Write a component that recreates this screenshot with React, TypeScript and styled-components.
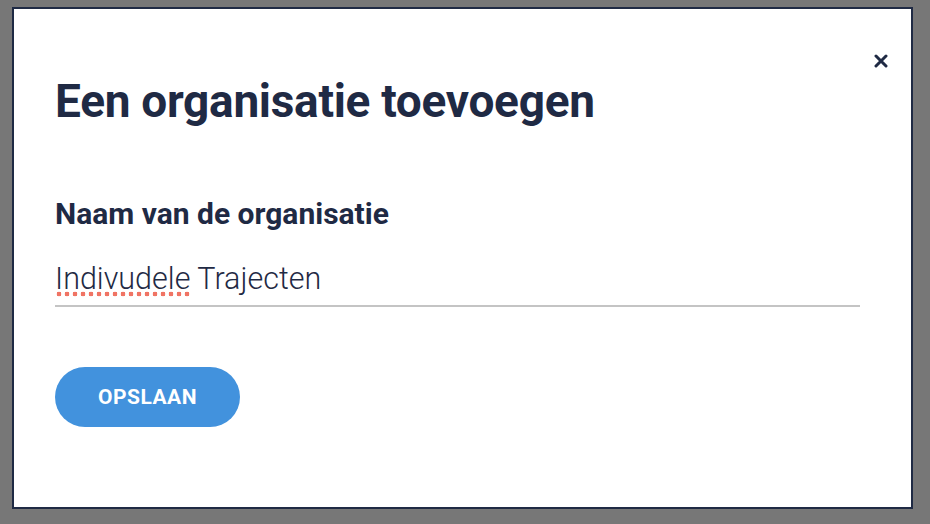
import React, { useState } from "react"
import styled, { createGlobalStyle } from "styled-components";

const GlobalStyle = createGlobalStyle`
  html, body {
    margin:0;
    padding:0;
    background:#777777;
  }
  body {
    font-family:Roboto, "Liberation Sans", sans-serif;
  }
`
const Page = styled.div`
  width:930px;
  height:524px;
  box-sizing:border-box;
  padding:7px 17px 15px 12px;
  display:flex;
`
const Modal = styled.div`
  position:relative;
  flex:1;
  background:#ffffff;
  border:2px solid #1f2a44;
  box-sizing:border-box;
  padding:66px 51px 0 41px;
  display:flex;
  flex-direction:column;
`
const CloseBtn = styled.button`
  position:absolute;
  top:40px;
  right:18px;
  width:24px;
  height:24px;
  padding:0;
  border:none;
  background:none;
  cursor:pointer;
  display:flex;
  align-items:center;
  justify-content:center;
`
const Title = styled.h1`
  margin:0;
  font-size:46px;
  line-height:52px;
  font-weight:700;
  color:#1f2a44;
  letter-spacing:-0.3px;
`
const Label = styled.label`
  margin-top:69px;
  font-size:30px;
  line-height:36px;
  font-weight:700;
  color:#1f2a44;
`
const Field = styled.div`
  margin-top:29px;
  border-bottom:2px solid #c4c4c4;
  padding-bottom:8px;
`
const Input = styled.div`
  font-size:30.5px;
  line-height:36px;
  font-weight:300;
  color:#1f2a44;
`
// spell-check squiggle under the misspelled word
const Misspelled = styled.span`
  background-image:radial-gradient(circle at 4px 3px, #f07464 2.2px, transparent 2.6px);
  background-size:8px 6px;
  background-repeat:repeat-x;
  background-position:0 100%;
  padding-bottom:1px;
`
const SubmitBtn = styled.button`
  align-self:flex-start;
  margin-top:60px;
  width:185px;
  height:60px;
  border:none;
  border-radius:30px;
  background:#4292dd;
  color:#ffffff;
  font-family:Roboto, "Liberation Sans", sans-serif;
  font-size:21px;
  font-weight:700;
  letter-spacing:0.5px;
  cursor:pointer;
  &:hover{
    opacity:0.9;
  }
`
export default function App() {
  const [name] = useState("Trajecten");
  return (
    <Page>
      <GlobalStyle />
      <Modal>
        <CloseBtn aria-label="Sluiten">
          <svg width="14" height="14" viewBox="0 0 14 14">
            <path d="M2 2L12 12M12 2L2 12" stroke="#1f2a44" strokeWidth="3" strokeLinecap="round" />
          </svg>
        </CloseBtn>
        <Title>Een organisatie toevoegen</Title>
        <Label>Naam van de organisatie</Label>
        <Field>
          <Input><Misspelled>Indivudele</Misspelled> {name}</Input>
        </Field>
        <SubmitBtn type="submit">OPSLAAN</SubmitBtn>
      </Modal>
    </Page>
  )
}
